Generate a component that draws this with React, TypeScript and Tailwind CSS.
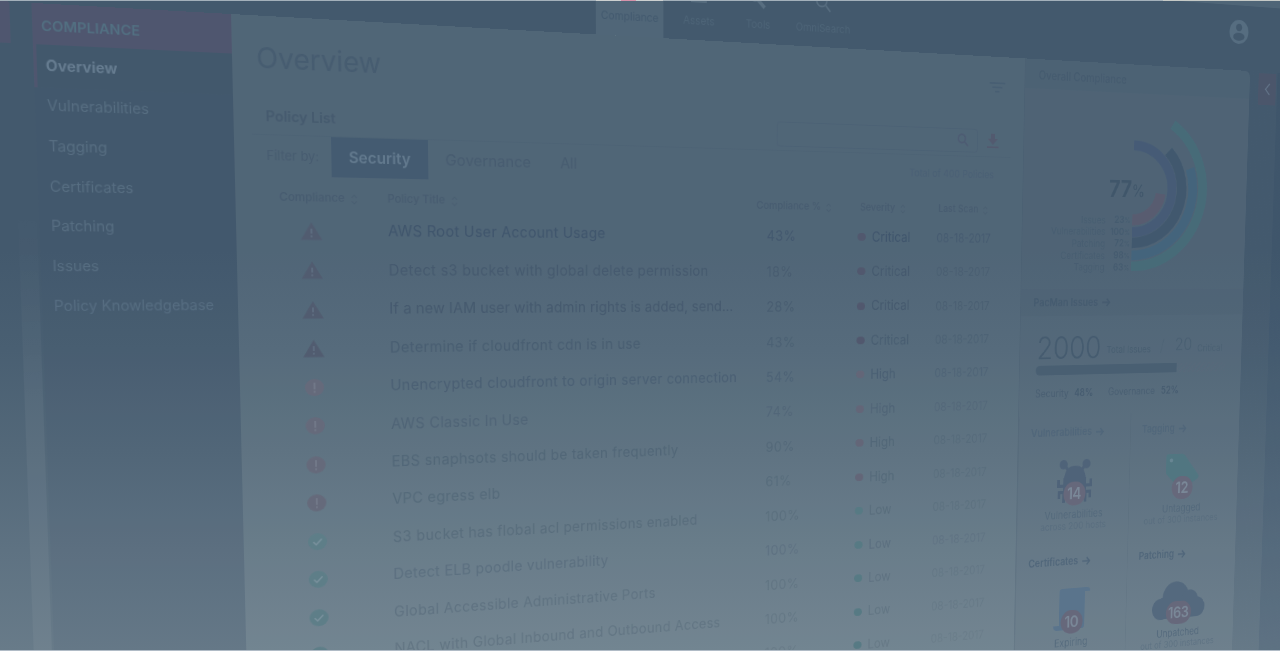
import React from "react";

type Pt = [number, number];

/* Projective transform that carries four points of the flat dashboard to the tilted view. */
function projection(src: Pt[], dst: Pt[]): string {
  const m: number[][] = [];
  src.forEach(([x, y], i) => {
    const [X, Y] = dst[i];
    m.push([x, y, 1, 0, 0, 0, -x * X, -y * X, X]);
    m.push([0, 0, 0, x, y, 1, -x * Y, -y * Y, Y]);
  });
  for (let c = 0; c < 8; c++) {
    let p = c;
    for (let r = c + 1; r < 8; r++) if (Math.abs(m[r][c]) > Math.abs(m[p][c])) p = r;
    [m[c], m[p]] = [m[p], m[c]];
    for (let r = 0; r < 8; r++) {
      if (r === c) continue;
      const f = m[r][c] / m[c][c];
      for (let k = c; k < 9; k++) m[r][k] -= f * m[c][k];
    }
  }
  const h = m.map((row, i) => row[8] / row[i]);
  return `matrix3d(${[h[0], h[3], 0, h[6], h[1], h[4], 0, h[7], 0, 0, 1, 0, h[2], h[5], 0, 1]
    .map((n) => n.toFixed(12))
    .join(",")})`;
}

const tilt = projection(
  [[300, 100], [1574, 100], [1574, 759], [300, 759]],
  [[231, 14], [1250, 71], [1234, 580.5], [246.5, 660]],
);

const menu = ["Vulnerabilities", "Tagging", "Certificates", "Patching", "Issues", "Policy Knowledgebase"];

type Row = { title: string; pct: string; sev: "Critical" | "High" | "Low"; tone: string };
const rows: Row[] = [
  { title: "AWS Root User Account Usage", pct: "43%", sev: "Critical", tone: "text-[#3f556c]" },
  { title: "Detect s3 bucket with global delete permission", pct: "18%", sev: "Critical", tone: "text-[#45596e]" },
  { title: "If a new IAM user with admin rights is added, send...", pct: "28%", sev: "Critical", tone: "text-[#45596e]" },
  { title: "Determine if cloudfront cdn is in use", pct: "43%", sev: "Critical", tone: "text-[#485d71]" },
  { title: "Unencrypted cloudfront to origin server connection", pct: "54%", sev: "High", tone: "text-[#4a5f73]" },
  { title: "AWS Classic In Use", pct: "74%", sev: "High", tone: "text-[#4f6476]" },
  { title: "EBS snaphsots should be taken frequently", pct: "90%", sev: "High", tone: "text-[#516677]" },
  { title: "VPC egress elb", pct: "61%", sev: "High", tone: "text-[#556a7a]" },
  { title: "S3 bucket has flobal acl permissions enabled", pct: "100%", sev: "Low", tone: "text-[#586d7c]" },
  { title: "Detect ELB poodle vulnerability", pct: "100%", sev: "Low", tone: "text-[#5b6f7f]" },
  { title: "Global Accessible Administrative Ports", pct: "100%", sev: "Low", tone: "text-[#5f7281]" },
  { title: "NACL with Global Inbound and Outbound Access", pct: "100%", sev: "Low", tone: "text-[#627583]" },
  { title: "", pct: "100%", sev: "Low", tone: "text-[#667986]" },
];

function StatusIcon({ sev }: { sev: Row["sev"] }) {
  if (sev === "Critical")
    return (
      <svg className="h-[19px] w-[22px]" viewBox="0 0 22 18">
        <path d="M11 0L22 18H0Z" fill="#515c70" />
        <path d="M11 6.5v5M11 13.2v2" stroke="#5f6f82" strokeWidth="1.7" />
      </svg>
    );
  if (sev === "High")
    return (
      <svg className="h-[18px] w-[20px]" viewBox="0 0 20 18">
        <ellipse cx="10" cy="9" rx="10" ry="9" fill="#656a7b" />
        <path d="M10 4v7M10 12.5v2" stroke="#757e8d" strokeWidth="1.5" />
      </svg>
    );
  return (
    <svg className="h-[18px] w-[20px]" viewBox="0 0 20 18">
      <ellipse cx="10" cy="9" rx="10" ry="9" fill="#5e7e88" />
      <path d="M5.5 9.2l3 3 6-6" fill="none" stroke="#7b929e" strokeWidth="1.6" />
    </svg>
  );
}

function Sort() {
  return (
    <svg className="ml-1.5 h-[11px] w-[8px]" viewBox="0 0 9 12" fill="none" stroke="#42586d" strokeOpacity=".6">
      <path d="M1.5 4L4.5 1l3 3M1.5 8l3 3 3-3" />
    </svg>
  );
}

function Arrow() {
  return (
    <svg className="ml-1.5 h-[11px] w-[12px]" viewBox="0 0 12 11" fill="none" stroke="currentColor" strokeWidth="1.8">
      <path d="M0 5.5h11M6.5 1L11 5.5 6.5 10" />
    </svg>
  );
}

const arcs = [
  { r: 39, w: 14, from: 98, color: "#585c70" },
  { r: 54.3, w: 12.5, from: 0, color: "#465b76" },
  { r: 68, w: 13.5, from: 45, color: "#41586e" },
  { r: 83.7, w: 12.5, from: 71, color: "#44647c" },
  { r: 97.7, w: 12.5, from: 33, color: "#476b78" },
];

function Donut() {
  return (
    <svg className="ml-[-2px] h-[217px] w-[120px]" viewBox="0 0 110 220" preserveAspectRatio="none">
      {arcs.map((a) => {
        const t = (a.from * Math.PI) / 180;
        return (
          <path
            key={a.r}
            d={`M${a.r * Math.sin(t)} ${110 - a.r * Math.cos(t)}A${a.r} ${a.r} 0 0 1 0 ${110 + a.r}`}
            fill="none"
            stroke={a.color}
            strokeWidth={a.w}
          />
        );
      })}
    </svg>
  );
}

const legend = [
  ["Issues", "23"],
  ["Vulnerabilities", "100"],
  ["Patching", "72"],
  ["Certificates", "98"],
  ["Tagging", "63"],
];

function Badge({ n }: { n: string }) {
  return (
    <div className="absolute bottom-[-3px] left-1/2 flex h-[30px] min-w-[33px] -translate-x-1/2 items-center justify-center rounded-full bg-[#66687b] px-1 text-[20px] font-semibold tracking-tight text-[#7a8898]">
      {n}
    </div>
  );
}

const BugIcon = () => (
  <svg className="h-[56px] w-[52px]" viewBox="0 0 52 56" fill="#4f6379">
    <circle cx="9" cy="7" r="6" />
    <circle cx="43" cy="7" r="6" />
    <path d="M11 9l8 8M41 9l-8 8" stroke="#4f6379" strokeWidth="4" />
    <path d="M10 24Q12 9 26 9T42 24z" />
    <path d="M9 24h34v15q-3 15-17 15T9 39z" />
    <path d="M12 34H2v-8M40 34h10v-8M11 42H3v8M41 42h8v8M14 46h-4v9M38 46h4v9" fill="none" stroke="#4f6379" strokeWidth="4" />
  </svg>
);
const TagIcon = () => (
  <svg className="h-[56px] w-[56px]" viewBox="0 0 52 56">
    <path d="M3 0Q0 0 0 4v21l22 21q3 2 6-1l22-12q3-3 0-6L29 2q-2-2-5-2z" fill="#517681" />
    <circle cx="8" cy="8" r="2.5" fill="#688693" />
  </svg>
);
const ScrollIcon = () => (
  <svg className="h-[56px] w-[56px]" viewBox="0 0 56 56" fill="#5a748c">
    <path d="M9 5Q9 1 14 1h36q5 0 5 5h-8v43q0 4-4 4H9z" />
    <path d="M0 48h38v6H6q-5 0-6-6z" />
  </svg>
);
const CloudIcon = () => (
  <svg className="h-[52px] w-[84px]" viewBox="0 0 84 50" fill="#54697e">
    <circle cx="14" cy="35" r="14" />
    <circle cx="37" cy="21" r="21" />
    <circle cx="59" cy="25" r="13" />
    <circle cx="70" cy="35" r="13" />
    <path d="M14 20h56v28H14z" />
  </svg>
);

type Tile = { name: string; icon: React.ReactNode; n: string; a: string; b: string };
const tiles: Tile[] = [
  { name: "Vulnerabilities", icon: <BugIcon />, n: "14", a: "Vulnerabilities", b: "across 200 hosts" },
  { name: "Tagging", icon: <TagIcon />, n: "12", a: "Untagged", b: "out of 300 instances" },
  { name: "Certificates", icon: <ScrollIcon />, n: "10", a: "Expiring", b: "" },
  { name: "Patching", icon: <CloudIcon />, n: "163", a: "Unpatched", b: "out of 300 instances" },
];

function TopBar() {
  return (
    <header className="h-[100px] bg-[#4f6577] pt-[19px]">
      <div className="flex h-[81px] items-end bg-[#43596d] pl-[688px] text-[12px] text-[#4e6578]">
        <div className="flex h-full w-[79px] flex-col items-center justify-end bg-[#506678] pb-[12px] text-[12px] text-[#435a6f]">
          Compliance
        </div>
        <div className="flex w-[85px] flex-col items-center pb-[12px]">
          <svg className="mb-[11px] h-[18px] w-[19px]" viewBox="0 0 19 18" fill="#556b7d">
            <path d="M0 4h19v14H0zM6 1h7v3H6z" />
          </svg>
          Assets
        </div>
        <div className="flex w-[60px] flex-col items-center pb-[12px]">
          <svg className="mb-[8px] h-[20px] w-[20px]" viewBox="0 0 20 20" fill="none" stroke="#586e80">
            <path d="M7 7l11 11" strokeWidth="4" />
            <circle cx="6" cy="6" r="4" strokeWidth="4" />
          </svg>
          Tools
        </div>
        <div className="flex w-[104px] flex-col items-center pb-[12px]">
          <svg className="mb-[8px] h-[22px] w-[20px]" viewBox="0 0 20 22" fill="none" stroke="#566c7f" strokeWidth="2">
            <circle cx="8" cy="8" r="6.5" />
            <path d="M13 13l6 7" />
          </svg>
          OmniSearch
        </div>
        <svg className="mb-[33px] ml-[523px] h-[30px] w-[31px]" viewBox="0 0 30 30">
          <circle cx="15" cy="15" r="15" fill="#566d80" />
          <circle cx="15" cy="9.5" r="4.8" fill="#43596d" />
          <ellipse cx="15" cy="21" rx="9" ry="5" fill="#43596d" />
        </svg>
      </div>
    </header>
  );
}

function Sidebar() {
  return (
    <nav className="flex w-[188px] shrink-0 flex-col bg-[#2f4a66]/[0.06] text-[14.3px] text-[#566d81]">
      <div className="flex h-[39px] items-center bg-[#4f566f] pl-2 pt-[3px] text-[13.6px] font-semibold text-[#527082]">COMPLIANCE</div>
      <div className="flex h-[41px] items-center border-l-[3px] border-[#4f566f] bg-[#42586c] pb-[1px] pl-2 text-[14.2px] font-bold text-[#667c90]">
        Overview
      </div>
      {menu.map((m) => (
        <div key={m} className="flex h-[38.7px] items-center whitespace-nowrap pb-[5px] pl-[11px]">
          {m}
        </div>
      ))}
    </nav>
  );
}

function Policies() {
  return (
    <main className="flex w-[936px] shrink-0 flex-col">
      <div className="flex h-[73px] items-start justify-between pl-[24px] pr-[27px] text-[#465c70]">
        <h1 className="mt-[21px] text-[28.5px] leading-[42px]">Overview</h1>
        <svg className="mt-[30px] h-[12px] w-[22px]" viewBox="0 0 22 12" stroke="#435a70" strokeOpacity=".6" strokeWidth="2">
          <path d="M0 1h22M4 6h14M8 11h6" />
        </svg>
      </div>
      <div className="mx-[18px] flex h-[46px] items-center border-b border-[#435a70]/20 pl-[14px] pr-[12px]">
        <h2 className="w-[574px] pt-2 text-[14.5px] font-semibold text-[#455a6e]">Policy List</h2>
        <div className="mt-2 flex h-[28px] w-[266px] items-center justify-end rounded-sm border border-[#435a70]/30 pr-3">
          <svg className="h-[15px] w-[15px]" viewBox="0 0 14 14" fill="none" stroke="#4d5b72" strokeWidth="1.8">
            <circle cx="5.5" cy="5.5" r="4.5" />
            <path d="M9 9l4.5 4.5" />
          </svg>
        </div>
        <svg className="ml-[12px] mt-2 h-[18px] w-[18px] shrink-0" viewBox="0 0 16 18" fill="#525a6f">
          <path d="M5 0h6v6h4l-7 7-7-7h4zM0 15h16v2H0z" />
        </svg>
      </div>
      <div className="mx-[18px] flex h-[41px] items-center text-[#475c70]">
        <span className="w-[79.5px] whitespace-nowrap pl-[14px] text-[13px]">Filter by:</span>
        <span className="flex h-full w-[102px] items-center justify-center bg-[#445b71] pb-[2px] text-[16px] font-semibold text-[#637a8e]">
          Security
        </span>
        <span className="ml-[19px] text-[16.5px]">Governance</span>
        <span className="ml-[33px] text-[16.5px]">All</span>
        <span className="ml-auto mr-[23px] text-[12px] text-[#4a6075]">Total of 400 Policies</span>
      </div>
      <div className="flex h-[35px] items-center pt-[9px] text-[11.8px] font-medium text-[#475c70]">
        <div className="flex w-[156px] items-center pl-[44px]">Compliance<Sort /></div>
        <div className="flex w-[425px] items-center">Policy Title<Sort /></div>
        <div className="flex w-[133px] items-center whitespace-nowrap">Compliance %<Sort /></div>
        <div className="flex w-[105px] items-center">Severity<Sort /></div>
        <div className="flex items-center">Last Scan<Sort /></div>
      </div>
      {rows.map((r, i) => (
        <div key={i} className={`flex h-[40.45px] shrink-0 items-center whitespace-nowrap text-[15.8px] ${r.tone}`}>
          <div className="flex w-[156px] justify-center pr-[4px]">
            <StatusIcon sev={r.sev} />
          </div>
          <div className={i === 2 ? "w-[438px] tracking-[0.12px]" : "w-[438px] tracking-[0.35px]"}>{r.title}</div>
          <div className="w-[117px] text-[16px] tracking-[0.5px] opacity-80">{r.pct}</div>
          <div className="flex w-[106px] items-center">
            <span
              className={`mr-[8px] h-[9px] w-[11px] rounded-full ${
                r.sev === "Critical" ? "bg-[#51586e]" : r.sev === "High" ? "bg-[#636678]" : "bg-[#577a84]"
              }`}
            />
            <span className="text-[15.5px]">{r.sev}</span>
          </div>
          <div className="text-[14px] opacity-60">08-18-2017</div>
        </div>
      ))}
    </main>
  );
}

function Summary() {
  return (
    <aside className="flex w-[338px] shrink-0 flex-col border-l border-[#3b5166]/15 bg-[#3b5166]/[0.08] text-[#455b6f]">
      <h3 className="flex h-[35px] shrink-0 items-center bg-[#3b5166]/[0.06] pl-[19px] pt-1 text-[13.8px] font-medium">Overall Compliance</h3>
      <div className="flex h-[242px] shrink-0 pt-[9px]">
        <div className="flex w-[163px] flex-col items-end whitespace-nowrap">
          <div className="mr-[-16px] mt-[92px] flex h-[34px] items-center text-[#40566a]">
            <b className="text-[29px]">77</b>
            <span className="pt-1 text-[20px]">%</span>
          </div>
          <div className="mt-[14px] flex flex-col">
            {legend.map(([k, v]) => (
              <div key={k} className="flex h-[14.6px] items-center justify-end text-[12px] leading-[15px]">
                <span className="opacity-70">{k}</span>
                <span className="w-[42px] pr-[5px] text-right">
                  <b className="font-semibold">{v}</b>
                  <span className="text-[9px]">%</span>
                </span>
              </div>
            ))}
          </div>
        </div>
        <Donut />
      </div>
      <h3 className="flex h-[33px] shrink-0 items-center bg-[#3b5166]/[0.08] pl-[18px] text-[13px] font-semibold">
        PacMan Issues<Arrow />
      </h3>
      <div className="flex h-[61px] shrink-0 items-end whitespace-nowrap pl-[24px] text-[12px]">
        <span className="text-[38.5px] font-light leading-[44px]">2000</span>
        <span className="mb-[9px] ml-2 opacity-80">Total Issues</span>
        <span className="mb-[7px] ml-[14px] text-[20px] font-light opacity-30">/</span>
        <span className="mb-[7px] ml-[16px] text-[22px] font-light opacity-70">20</span>
        <span className="mb-[9px] ml-2 opacity-60">Critical</span>
      </div>
      <div className="ml-[23px] flex h-[12px] w-[288px] shrink-0">
        <div className="w-[212px] rounded-l-full bg-[#495f72]" />
        <div className="flex-1 bg-[repeating-linear-gradient(-45deg,#5f657733_0_2px,transparent_2px_5px)]" />
      </div>
      <div className="flex h-[51px] shrink-0 items-center whitespace-nowrap pb-1 pl-[23px] text-[12.5px]">
        <span className="opacity-75">Security</span>
        <b className="ml-[8px] font-medium">48%</b>
        <span className="ml-[22px] opacity-75">Governance</span>
        <b className="ml-[9px] font-medium">52%</b>
      </div>
      <div className="grid shrink-0 grid-cols-[166px_164px] text-[#50667a]">
        {tiles.map((t) => (
          <div key={t.name} className="flex h-[163px] flex-col items-center whitespace-nowrap border-l border-[#3b5166]/10">
            <h3 className="flex h-[38px] w-full items-center pl-[17px] pt-1 text-[13px] font-semibold">
              {t.name}<Arrow />
            </h3>
            <div className="relative mt-[16px] flex h-[56px] items-center">
              {t.icon}
              <Badge n={t.n} />
            </div>
            <div className="mt-[6px] text-[13px] leading-[16px] opacity-80">{t.a}</div>
            <div className="text-[12px] leading-[14px] opacity-50">{t.b}</div>
          </div>
        ))}
      </div>
    </aside>
  );
}

export default function App() {
  return (
    <div className="h-[651px] w-[1280px] overflow-hidden bg-[linear-gradient(#43596d_0px,#43596d_250px,#495f72_350px,#536879_450px,#5e7282_550px,#687b89_651px)] font-['Inter','Open_Sans',sans-serif]">
      <div className="h-[1000px] w-[1680px] origin-top-left" style={{ transform: tilt }}>
        <TopBar />
        <div className="flex h-[900px]">
          <div className="w-[93px] shrink-0">
            <div className="h-[39px] w-[92px] bg-[#4f566f]" />
          </div>
          <div className="w-[17px] shrink-0 bg-[linear-gradient(transparent_200px,rgba(255,255,255,0.045)_380px)]" />
          <div className="w-[2px] shrink-0" />
          <Sidebar />
          <div className="flex w-[1274px] shrink-0 rounded-tr-lg bg-[#f4fff6]/[0.076]">
            <Policies />
            <Summary />
          </div>
          <div className="w-[106px] bg-[linear-gradient(to_right,rgba(60,80,105,0.05)_0_44px,rgba(45,70,100,0.18)_44px)] pl-[14px] pt-[2px]">
            <div className="flex h-[40px] w-[28px] items-center justify-center bg-[#4b566b]">
              <svg className="h-[16px] w-[9px]" viewBox="0 0 9 16" fill="none" stroke="#627388" strokeWidth="1.8">
                <path d="M8 1L1.5 8 8 15" />
              </svg>
            </div>
          </div>
        </div>
      </div>
      <div className="absolute left-0 top-0 flex h-[651px] w-[1280px] flex-col justify-between">
        <div className="flex h-px bg-[#a3b0ba]">
          <div className="ml-[596px] w-[25px] bg-[#ccd0d0]" />
          <div className="w-[15px] bg-[#d592aa]" />
          <div className="w-[27px] bg-[#ccd0d0]" />
          <div className="ml-[500px] flex-1 bg-[#c5c9c6]" />
        </div>
        <div className="h-px bg-[#b0bbc6]" />
      </div>
    </div>
  );
}
